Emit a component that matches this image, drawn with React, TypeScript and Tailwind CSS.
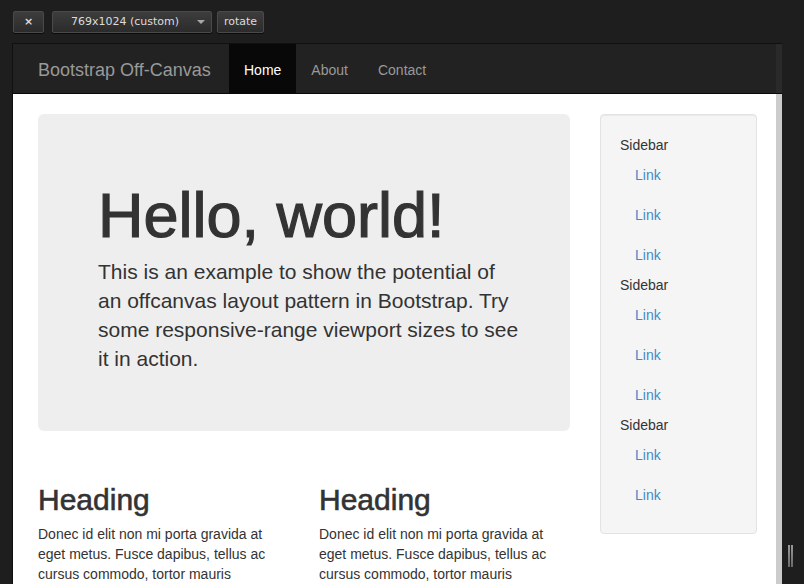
import React from 'react';

const btn =
  "flex h-[22px] items-center rounded-[2px] border border-[#4a4a4a] bg-gradient-to-b from-[#3d3d3d] to-[#2b2b2b] font-['DejaVu_Sans',sans-serif] text-[11px] text-[#dcdcdc] shadow-[0_1px_0_rgba(0,0,0,0.6)]";

function Toolbar() {
  return (
    <div className="flex items-center pl-[13px] pt-[11px]">
      <button className={`${btn} w-[31px] justify-center font-bold text-[#b5b5b5]`}>×</button>
      <div className={`${btn} ml-[8px] w-[160px] justify-between pl-[18px] pr-[6px]`}>
        <span>769x1024 (custom)</span>
        <span className="h-0 w-0 border-l-[4px] border-r-[4px] border-t-[4px] border-l-transparent border-r-transparent border-t-[#a8a8a8]" />
      </div>
      <button className={`${btn} ml-[5px] w-[47px] justify-center`}>rotate</button>
    </div>
  );
}

function Navbar() {
  return (
    <div className="flex h-[50px] shrink-0">
      <div className="flex w-[763px] border-b border-[#080808] bg-[#222] text-[14px]">
        <a className="flex w-[216px] items-center pl-[25px] pt-[2px] text-[18px] leading-[20px] text-[#999]">
          Bootstrap Off-Canvas
        </a>
        <a className="flex items-center bg-[#080808] px-[15px] pt-[3px] text-white">Home</a>
        <a className="flex items-center px-[15px] pt-[3px] text-[#999]">About</a>
        <a className="flex items-center px-[15px] pt-[3px] text-[#999]">Contact</a>
      </div>
      <div className="w-[6px] border-b border-[#080808] bg-[#2a2a2a]" />
    </div>
  );
}

const sidebar = [
  ['Sidebar', 'Link', 'Link', 'Link'],
  ['Sidebar', 'Link', 'Link', 'Link'],
  ['Sidebar', 'Link', 'Link'],
];

function Sidebar() {
  return (
    <div className="h-[420px] w-[157px] rounded-[4px] border border-[#e3e3e3] bg-[#f5f5f5] px-[19px] pt-[20px] text-[14px] leading-[20px] shadow-[inset_0_1px_1px_rgba(0,0,0,0.05)]">
      <ul>
        {sidebar.flat().map((item, i) =>
          item === 'Sidebar' ? (
            <li key={i} className="text-[#333]">Sidebar</li>
          ) : (
            <li key={i}>
              <a className="block px-[15px] py-[10px] text-[#428bca]">{item}</a>
            </li>
          )
        )}
      </ul>
    </div>
  );
}

const lorem =
  'Donec id elit non mi porta gravida at eget metus. Fusce dapibus, tellus ac cursus commodo, tortor mauris condimentum nibh, ut fermentum massa justo sit amet risus.';

export default function App() {
  return (
    <div className="relative h-[584px] w-[804px] overflow-hidden bg-[#1e1e1e] font-['Liberation_Sans',Arial,sans-serif]">
      <Toolbar />

      <div className="ml-[12px] mt-[10px] flex h-[545px] w-[770px] flex-col border-l border-t border-[#101010]">
        <Navbar />
        <div className="flex flex-1">
          <div className="flex w-[763px] gap-[30px] bg-white pl-[25px] pr-[19px] pt-[20px] text-[#333]">
            <div className="w-[532px] shrink-0">
              <div className="h-[317px] rounded-[6px] bg-[#eee] pl-[60px] pr-[48px] pt-[48px]">
                <h1 className="mt-[19px] text-[63px] leading-[69px] [-webkit-text-stroke:1.2px_#333]">
                  Hello, world!
                </h1>
                <p className="mt-[7px] text-[21px] leading-[29px]">
                  This is an example to show the potential of an offcanvas layout pattern in Bootstrap. Try some
                  responsive-range viewport sizes to see it in action.
                </p>
              </div>
              <div className="mt-[52px] grid grid-cols-2 gap-x-[30px]">
                {[0, 1].map((i) => (
                  <div key={i}>
                    <h2 className="mb-[8px] text-[30px] leading-[33px] [-webkit-text-stroke:0.6px_#333]">Heading</h2>
                    <p className="text-[14px] leading-[20px]">{lorem}</p>
                  </div>
                ))}
              </div>
            </div>
            <Sidebar />
          </div>
          <div className="w-[6px] bg-[#cccccc]" />
        </div>
      </div>

      {/* resize grip */}
      <div className="absolute left-[788px] top-[545px] flex gap-[1px]">
        <div className="h-[22px] w-[2px] bg-gradient-to-b from-[#9a9a9a] to-[#6a6a6a]" />
        <div className="h-[22px] w-[2px] bg-gradient-to-b from-[#9a9a9a] to-[#6a6a6a]" />
      </div>
    </div>
  );
}
